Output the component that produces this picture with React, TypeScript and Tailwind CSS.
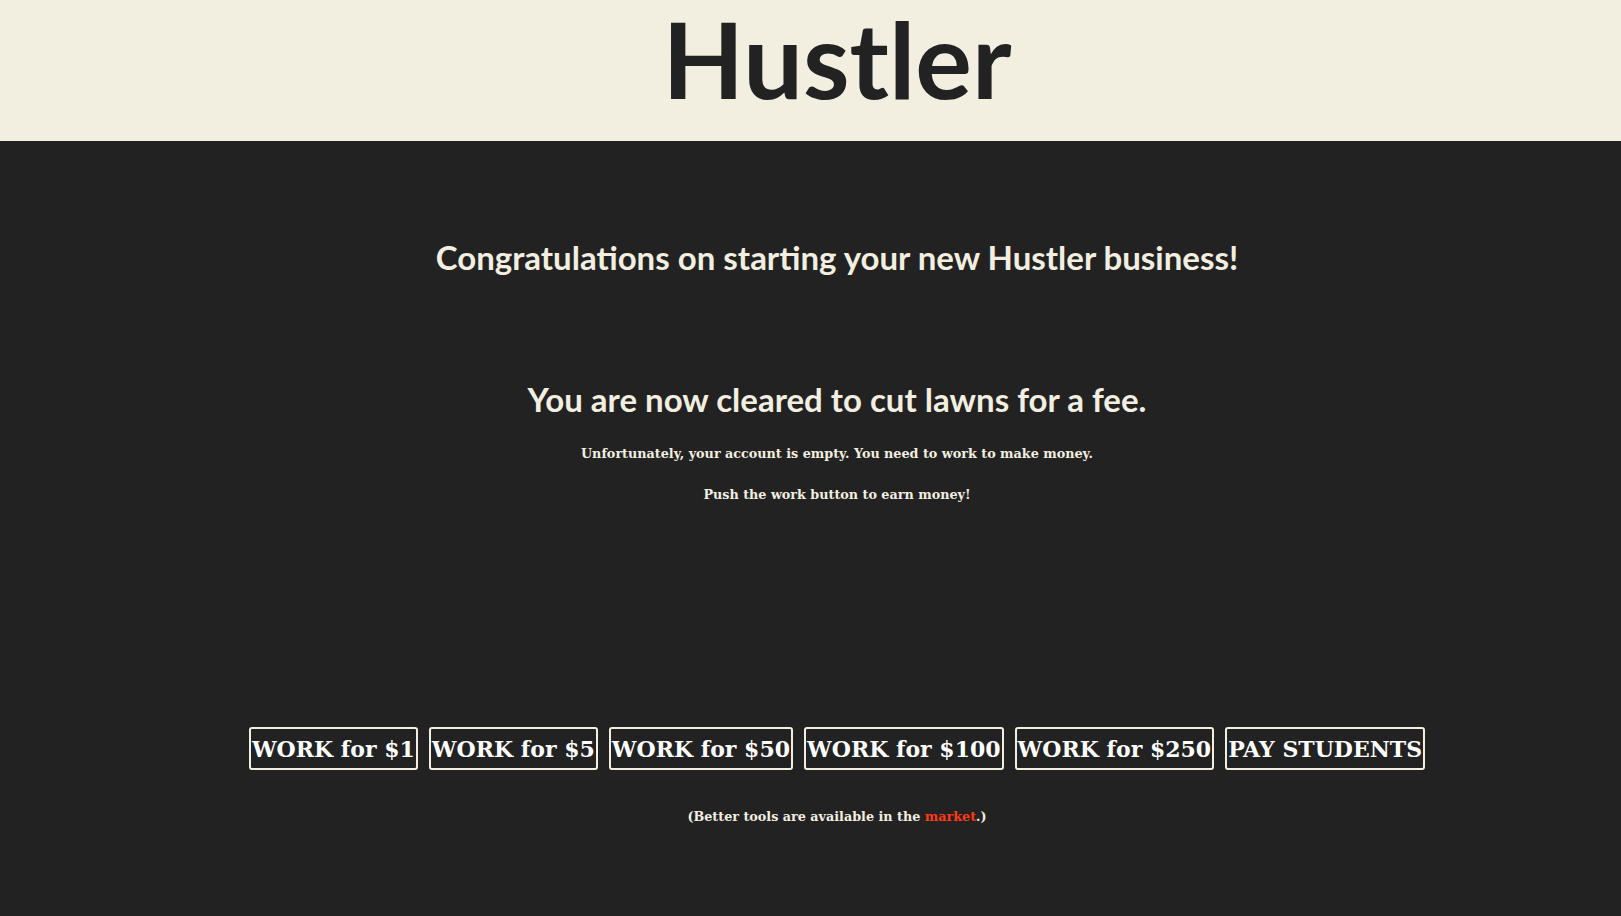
import React from "react";

const buttons = ["WORK for $1", "WORK for $5", "WORK for $50", "WORK for $100", "WORK for $250", "PAY STUDENTS"];

export default function App() {
  return (
    <div className="min-h-[916px] w-full bg-[#222222] text-[#f2eee0]">
      <header className="flex h-[141px] justify-center bg-[#f2eee0] pl-[53px] pt-[5px]">
        <h1 className="font-['Lato','Open_Sans',sans-serif] text-[106px] font-bold leading-none text-[#222222]">
          Hustler
        </h1>
      </header>
      <main className="flex flex-col items-center pl-[53px]">
        <h2 className="mt-[96px] font-['Lato','Open_Sans',sans-serif] text-[33px] font-bold leading-[40px]">
          Congratulations on starting your new Hustler business!
        </h2>
        <h3 className="mt-[102px] font-['Lato','Open_Sans',sans-serif] text-[33px] font-bold leading-[40px]">
          You are now cleared to cut lawns for a fee.
        </h3>
        <p className="mt-[24px] font-['DejaVu_Serif',serif] text-[12.75px] font-bold leading-[22px]">
          Unfortunately, your account is empty. You need to work to make money.
        </p>
        <p className="mt-[19px] font-['DejaVu_Serif',serif] text-[12.75px] font-bold leading-[22px]">
          Push the work button to earn money!
        </p>
        <div className="mt-[221px] flex gap-[11px]">
          {buttons.map((b) => (
            <button
              key={b}
              className="h-[43px] rounded-[3px] border-2 border-[#f2eee0] bg-[#222222] px-[1px] font-['DejaVu_Serif',serif] text-[22px] font-bold leading-none text-white"
            >
              {b}
            </button>
          ))}
        </div>
        <p className="mt-[36px] font-['DejaVu_Serif',serif] text-[12.75px] font-bold leading-[22px]">
          (Better tools are available in the <span className="text-[#ff3a12]">market</span>.)
        </p>
      </main>
    </div>
  );
}
